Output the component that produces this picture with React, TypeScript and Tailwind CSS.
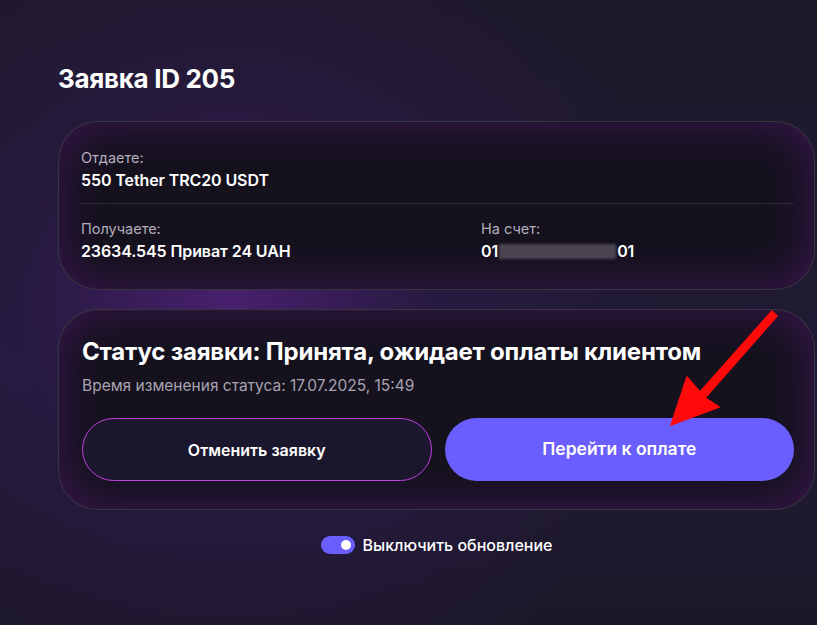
import React from "react";

function RedArrow() {
  return (
    <svg
      className="pointer-events-none absolute left-0 top-0"
      width="817"
      height="625"
      viewBox="0 0 817 625"
    >
      <polygon
        points="772,311 777,316 705,398 719,407 671,425 687,377 700,392"
        fill="#ff0a0a"
        stroke="#ff0a0a"
        strokeWidth="1.5"
        strokeLinejoin="round"
      />
    </svg>
  );
}

function Field({ label, value }: { label: string; value: React.ReactNode }) {
  return (
    <div>
      <p className="text-[14.5px] leading-5 text-[#b3adbd]">{label}</p>
      <p className="mt-[1px] text-[16px] font-semibold leading-[22px] tracking-[-0.1px] text-white">
        {value}
      </p>
    </div>
  );
}

export default function App() {
  return (
    <div
      className="relative min-h-[625px] w-full overflow-hidden bg-[#1b1729] font-['Inter',sans-serif]"
      style={{
        backgroundImage:
          "radial-gradient(circle at 230px 300px, rgba(100,35,150,0.6) 0px, rgba(60,25,100,0.28) 200px, rgba(27,23,41,0) 440px), linear-gradient(180deg, #1d1929 0%, #201b35 60%, #1c1829 100%)",
      }}
    >
      <div className="flex flex-col pl-[58px] pr-[2px] pt-[63px]">
        <h1 className="text-[26px] font-bold leading-8 tracking-[-0.3px] text-white">
          Заявка ID 205
        </h1>

        <div className="mt-[26px] rounded-[40px] border border-white/15 bg-[#15121e] pb-[27px] pl-[22px] pr-[20px] pt-[26px] shadow-[inset_0_0_45px_rgba(120,30,160,0.4)]">
          <Field label="Отдаете:" value="550 Tether TRC20 USDT" />
          <div className="mb-[15px] mt-[12px] h-px bg-white/10" />
          <div className="grid grid-cols-[400px_1fr]">
            <Field label="Получаете:" value="23634.545 Приват 24 UAH" />
            <Field
              label="На счет:"
              value={
                <span className="flex items-center">
                  01
                  <span className="mx-[1px] inline-block h-[15px] w-[117px] bg-[#4a4452] blur-[1px]" />
                  01
                </span>
              }
            />
          </div>
        </div>

        <div className="mt-[19px] rounded-[40px] border border-white/15 bg-[#15121e] pb-[28px] pl-[23px] pr-[20px] pt-[28px] shadow-[inset_0_0_45px_rgba(120,30,160,0.4)]">
          <h2 className="text-[24px] font-bold leading-7 tracking-[-0.2px] text-white">
            Статус заявки: Принята, ожидает оплаты клиентом
          </h2>
          <p className="mt-[10px] text-[15.5px] leading-5 text-[#a8a2b2]">
            Время изменения статуса: 17.07.2025, 15:49
          </p>
          <div className="mt-[22px] grid grid-cols-2 gap-[13px]">
            <button className="h-[63px] rounded-full border border-[#c23fe0] bg-[#201a38]/60 text-[16px] font-semibold text-white">
              Отменить заявку
            </button>
            <button className="h-[63px] rounded-full bg-[#6a5ffe] text-[17.5px] font-semibold text-white">
              Перейти к оплате
            </button>
          </div>
        </div>

        <div className="mt-[23px] flex items-center justify-center gap-2">
          <span className="flex h-[18px] w-[34px] items-center justify-end rounded-full bg-[#6a5ffe] pr-[4px]">
            <span className="h-[10px] w-[10px] rounded-full bg-white" />
          </span>
          <span className="text-[16px] font-medium text-white">
            Выключить обновление
          </span>
        </div>
      </div>
      <RedArrow />
    </div>
  );
}
